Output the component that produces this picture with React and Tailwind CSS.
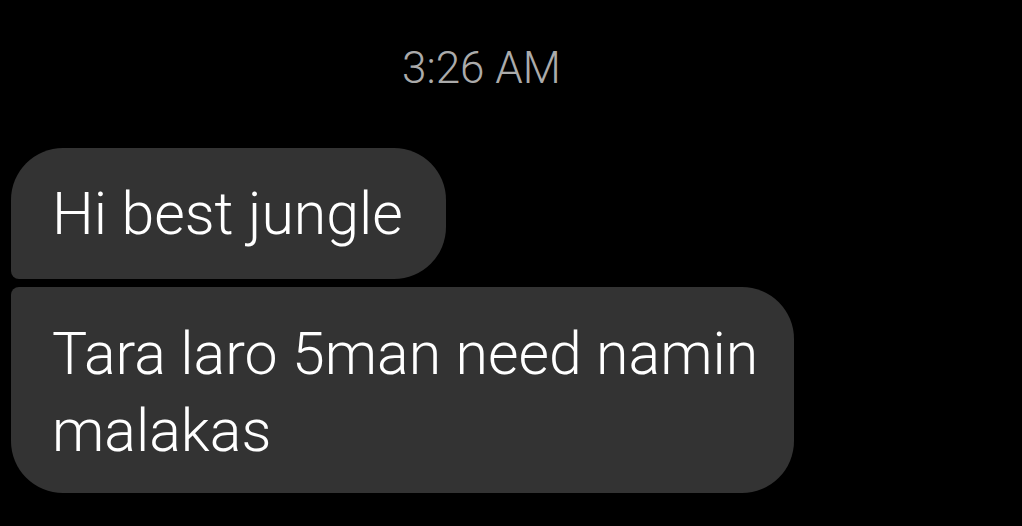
export default function App() {
  return (
    <div className="min-h-[526px] w-[1022px] bg-black overflow-hidden font-['Roboto',sans-serif]">
      {/* Timestamp */}
      <div className="pt-[43px] pl-[402px] text-[44px] leading-[50px] font-light text-[#ababab]">
        3:26 AM
      </div>

      {/* Messages */}
      <div className="mt-[55px] pl-[11px] flex flex-col items-start gap-[8px]">
        <div className="bg-[#333333] text-white rounded-[52px] rounded-bl-[8px] w-[435px] h-[131px] pl-[41px] flex items-center text-[59px] font-light leading-[77px]">
          Hi best jungle
        </div>
        <div className="bg-[#333333] text-white rounded-[52px] rounded-tl-[8px] w-[783px] h-[206px] pl-[41px] pt-[28px] text-[59px] font-light leading-[77px]">
          Tara laro 5man need namin
          <br />
          malakas
        </div>
      </div>
    </div>
  )
}
